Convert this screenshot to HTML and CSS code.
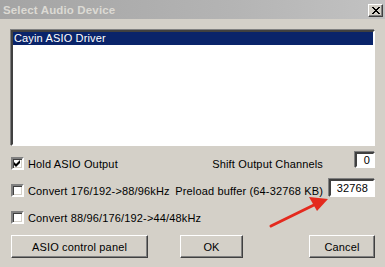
FILE: index.html
```html
<!DOCTYPE html>
<html lang="en">
<head>
  <meta charset="UTF-8">
  <title>Select Audio Device</title>
  <link rel="stylesheet" href="styles.css">
</head>
<body>
  <div class="window">
    <div class="titlebar">
      <span class="title">Select Audio Device</span>
      <span class="close-btn">
        <svg width="8" height="7" viewBox="0 0 8 7"><path d="M0 0L7 7M1 0L8 7M7 0L0 7M8 0L1 7" stroke="#000" stroke-width="1"/></svg>
      </span>
    </div>

    <div class="content">
      <div class="listbox">
        <div class="list-item selected">Cayin ASIO Driver</div>
      </div>

      <div class="row row-1">
        <label class="check">
          <span class="box checked">
            <svg width="7" height="7" viewBox="0 0 7 7"><path d="M0 2L2 4L6 0V3L2 7L0 5Z" fill="#000"/></svg>
          </span>
          Hold ASIO Output
        </label>
        <div class="field">
          <span class="field-label">Shift Output Channels</span>
          <span class="field-slot"><span class="edit small">0</span></span>
        </div>
      </div>

      <div class="row row-2">
        <label class="check"><span class="box"></span>Convert 176/192-&gt;88/96kHz</label>
        <div class="field">
          <span class="field-label">Preload buffer (64-32768 KB)</span>
          <span class="field-slot"><span class="edit wide">32768</span></span>
        </div>
      </div>

      <div class="row row-3">
        <label class="check"><span class="box"></span>Convert 88/96/176/192-&gt;44/48kHz</label>
      </div>

      <div class="buttons">
        <button class="btn btn-asio">ASIO control panel</button>
        <button class="btn btn-ok">OK</button>
        <button class="btn btn-cancel">Cancel</button>
      </div>
    </div>

    <!-- red arrow pointing at the buffer field -->
    <svg class="arrow" width="385" height="267" viewBox="0 0 385 267">
      <path d="M271 226L316 204" stroke="#e42a1e" stroke-width="3" stroke-linecap="round"/>
      <path d="M328 199L309 197L317 211Z" fill="#e42a1e"/>
    </svg>
  </div>
</body>
</html>
```

FILE: styles.css
```css
body {
  margin: 0;
  font-family: 'Liberation Sans', Arial, sans-serif;
  font-size: 11px;
  letter-spacing: 0.15px;
  color: #000;
  background: #d4d0c8;
}

.window {
  position: relative;
  width: 385px;
  height: 267px;
  overflow: hidden;
  background: #d4d0c8;
}

.titlebar {
  height: 19px;
  display: flex;
  align-items: center;
  justify-content: space-between;
  padding: 0 2px 0 3px;
  background: linear-gradient(to right, #a4a4a4, #b4b4b4 60%, #c2c2c2);
}

.title {
  font-weight: bold;
  font-size: 11.5px;
  color: #dcdad4;
}

.close-btn {
  width: 13px;
  height: 11px;
  display: flex;
  align-items: center;
  justify-content: center;
  background: #d4d0c8;
  border-top: 1px solid #fff;
  border-left: 1px solid #fff;
  border-right: 1px solid #404040;
  border-bottom: 1px solid #404040;
  box-shadow: inset -1px -1px 0 #808080;
  margin-top: 1px;
}

.content {
  padding: 11px 10px 0 11px;
}

.listbox {
  height: 112px;
  background: #fff;
  border-top: 2px solid #404040;
  border-left: 2px solid #404040;
  border-right: 2px solid #fff;
  border-bottom: 2px solid #fff;
  box-shadow: -1px -1px 0 #808080, 1px 1px 0 #d4d0c8;
}

.list-item {
  height: 13px;
  line-height: 13px;
  padding-left: 1px;
}

.list-item.selected {
  background: #0a246a;
  color: #fff;
}

.row {
  display: flex;
  justify-content: space-between;
  align-items: flex-start;
}

.row-1 { margin-top: 6px; height: 18px; }
.row-2 { margin-top: 9px; height: 18px; }
.row-3 { margin-top: 14px; height: 13px; }

.check {
  display: flex;
  align-items: center;
  height: 13px;
  margin-top: 5px;
  white-space: nowrap;
}

.row-3 .check { margin-top: 0; }

.box {
  width: 9px;
  height: 9px;
  margin-right: 4px;
  display: flex;
  align-items: center;
  justify-content: center;
  background: #fff;
  border-top: 2px solid #808080;
  border-left: 2px solid #808080;
  border-right: 2px solid #fff;
  border-bottom: 2px solid #fff;
  box-shadow: inset 1px 1px 0 #404040, inset -1px -1px 0 #d4d0c8;
}

.field {
  display: flex;
  align-items: flex-start;
}

.field-label {
  margin-top: 6px;
  line-height: 13px;
  text-align: right;
  white-space: nowrap;
}

.field-slot {
  width: 52px;
  display: flex;
  justify-content: flex-end;
}

.edit {
  box-sizing: border-box;
  background: #fff;
  text-align: right;
  padding-right: 3px;
  border-top: 2px solid #404040;
  border-left: 2px solid #404040;
  border-right: 2px solid #fff;
  border-bottom: 2px solid #fff;
  box-shadow: -1px -1px 0 #808080, 1px 1px 0 #d4d0c8;
}

.edit.small {
  width: 20px;
  height: 16px;
  line-height: 12px;
}

.edit.wide {
  width: 46px;
  height: 18px;
  line-height: 14px;
  padding-right: 5px;
}

.buttons {
  display: flex;
  margin-top: 11px;
}

.btn {
  box-sizing: border-box;
  height: 23px;
  padding: 0;
  font-family: inherit;
  font-size: 11px;
  letter-spacing: 0.15px;
  color: #000;
  background: #d4d0c8;
  border-top: 1px solid #fff;
  border-left: 1px solid #fff;
  border-right: 1px solid #404040;
  border-bottom: 1px solid #404040;
  box-shadow: inset -1px -1px 0 #808080;
}

.btn-asio { width: 137px; }
.btn-ok { width: 63px; margin-left: 32px; }
.btn-cancel { width: 66px; margin-left: auto; }

.arrow {
  position: absolute;
  left: 0;
  top: 0;
  pointer-events: none;
}
```
